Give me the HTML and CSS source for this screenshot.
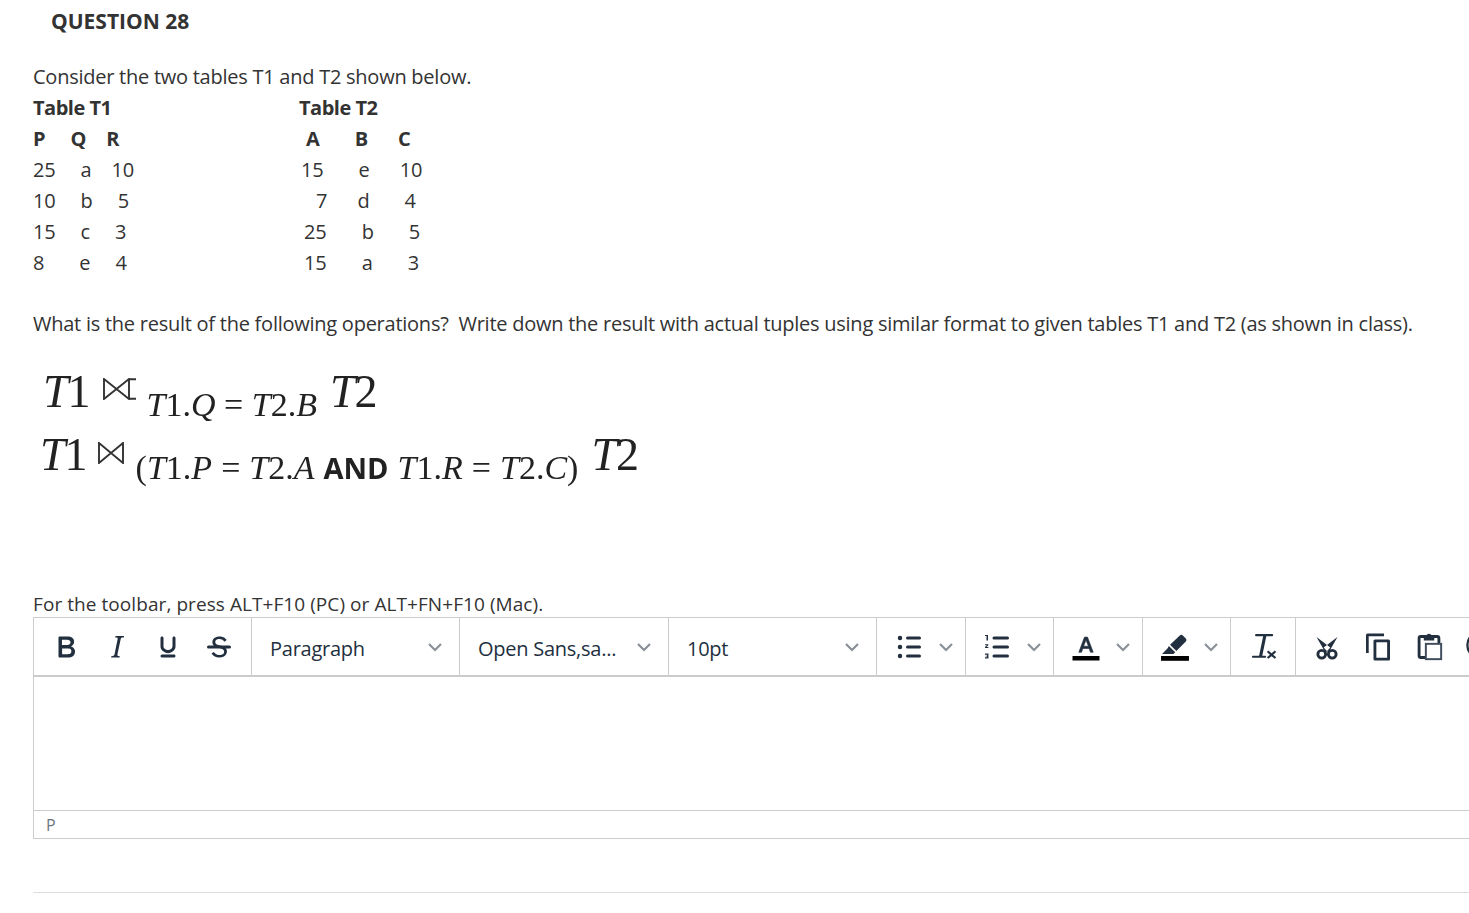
FILE: index.html
```html
<!DOCTYPE html>
<html lang="en">
<head>
<meta charset="utf-8">
<title>Question 28</title>
<link rel="stylesheet" href="styles.css">
</head>
<body>
<h1 class="q-title">QUESTION 28</h1>
<main class="content">
  <p class="line">Consider the two tables T1 and T2 shown below.</p>
  <div class="tables">
    <div class="tbl">
      <div class="line strong t-title">Table T1</div>
      <div class="line strong">P     Q    R</div>
      <div class="line">25     a    10</div>
      <div class="line">10     b     5</div>
      <div class="line">15     c     3</div>
      <div class="line">8       e     4</div>
    </div>
    <div class="tbl t2">
      <div class="line strong t-title t2-title">Table T2</div>
      <div class="line strong"> A       B      C</div>
      <div class="line">15       e      10</div>
      <div class="line">   7      d       4</div>
      <div class="line nudge"> 25       b       5</div>
      <div class="line nudge"> 15       a       3</div>
    </div>
  </div>
  <p class="line question">What is the result of the following operations?  Write down the result with actual tuples using similar format to given tables T1 and T2 (as shown in class).</p>

  <div class="formula">
    <div class="f-line f1">
      <span class="big"><i>T</i>1</span>
      <svg class="join" viewBox="0 0 33 22"><path d="M1 1v20L26 1v20L1 1zM26 1.200h7M26 20.800h7" fill="none" stroke="#333" stroke-width="1.900"/></svg>
      <span class="sub"><i>T</i>1.<i>Q</i> = <i>T</i>2.<i>B</i></span>
      <span class="big"><i>T</i>2</span>
    </div>
    <div class="f-line f2">
      <span class="big"><i>T</i>1</span>
      <svg class="join j2" viewBox="0 0 26 22"><path d="M1 1v20L25 1v20L1 1z" fill="none" stroke="#333" stroke-width="1.900"/></svg>
      <span class="sub wide">(<i>T</i>1.<i>P</i> = <i>T</i>2.<i>A</i> <b class="and">AND</b> <i>T</i>1.<i>R</i> = <i>T</i>2.<i>C</i>)</span>
      <span class="big"><i>T</i>2</span>
    </div>
  </div>

  <p class="hint">For the toolbar, press ALT+F10 (PC) or ALT+FN+F10 (Mac).</p>
  <section class="editor">
    <div class="toolbar">
      <div class="group g-format">
        <button class="btn"><svg viewBox="0 0 24 24"><path d="M7.8 19c-.3 0-.5 0-.6-.2l-.2-.5V5.7c0-.2 0-.4.2-.5l.6-.2h5c1.5 0 2.7.3 3.5 1 .7.6 1.1 1.4 1.1 2.5a3 3 0 0 1-.6 1.9c-.4.6-1 1-1.6 1.2.4.1.9.3 1.3.6s.8.7 1 1.2c.4.4.5 1 .5 1.6 0 1.3-.4 2.3-1.3 3-.8.7-2.1 1-3.8 1H7.8zm5-8.3c.6 0 1.2-.1 1.6-.5.4-.3.6-.7.6-1.3 0-1.1-.8-1.7-2.3-1.7H9.3v3.5h3.4zm.5 6c.7 0 1.3-.1 1.7-.4.4-.4.6-.9.6-1.5s-.2-1-.7-1.4c-.4-.3-1-.4-2-.4H9.4v3.8h4z"/></svg></button>
        <button class="btn"><svg viewBox="0 0 24 24"><path d="M16.7 4.7l-.1.9h-.3c-.6 0-1 0-1.4.3-.3.3-.4.6-.5 1.1l-2.1 9.8v.6c0 .5.4.8 1.4.8h.2l-.2.8H8l.2-.8h.2c1.1 0 1.8-.5 2-1.5l2-9.8.1-.5c0-.6-.4-.8-1.4-.8h-.3l.2-.9h5.8z"/></svg></button>
        <button class="btn"><svg viewBox="0 0 24 24"><path d="M16 5c.6 0 1 .4 1 1v5.5a4 4 0 0 1-.4 1.8l-1 1.4a5.3 5.3 0 0 1-5.5 1 5 5 0 0 1-1.6-1c-.5-.4-.8-.9-1.1-1.4a4 4 0 0 1-.4-1.8V6c0-.6.4-1 1-1s1 .4 1 1v5.5c0 .3 0 .6.2 1l.6.7a3.3 3.3 0 0 0 2.2.8 3.4 3.4 0 0 0 2.2-.8c.3-.2.4-.5.6-.8l.2-.9V6c0-.6.4-1 1-1zM8 17h8c.6 0 1 .4 1 1s-.4 1-1 1H8a1 1 0 0 1 0-2z"/></svg></button>
        <button class="btn"><svg viewBox="0 0 24 24"><path d="M15.6 8.5c-.5-.7-1-1.1-1.3-1.3-.6-.4-1.3-.6-2-.6-2.7 0-2.8 1.7-2.8 2.1 0 1.6 1.8 2 3.2 2.3 4.4.9 4.6 2.8 4.6 3.9 0 1.4-.7 4.1-5 4.1A6.2 6.2 0 0 1 7 16.4l1.5-1.1c.4.6 1.6 2 3.7 2 1.6 0 2.5-.4 3-1.2.4-.8.3-2-.8-2.6-.7-.4-1.6-.7-2.9-1-1-.2-3.9-.8-3.9-3.6C7.6 6 10.3 5 12.4 5c2.9 0 4.2 1.6 4.7 2.4l-1.5 1.1z"/><path d="M5 11h14a1 1 0 0 1 0 2H5a1 1 0 0 1 0-2z"/></svg></button>
      </div>
      <div class="group select s-para"><span>Paragraph</span><svg class="chev" viewBox="0 0 16 10"><path d="M2 2l6 6 6-6"/></svg></div>
      <div class="group select s-font"><span>Open Sans,sa...</span><svg class="chev" viewBox="0 0 16 10"><path d="M2 2l6 6 6-6"/></svg></div>
      <div class="group select s-size"><span>10pt</span><svg class="chev" viewBox="0 0 16 10"><path d="M2 2l6 6 6-6"/></svg></div>
      <div class="group split sp-a">
        <svg class="ico" viewBox="0 0 24 24"><path d="M11 5h8a1 1 0 0 1 0 2h-8a1 1 0 0 1 0-2zm0 6h8a1 1 0 0 1 0 2h-8a1 1 0 0 1 0-2zm0 6h8a1 1 0 0 1 0 2h-8a1 1 0 0 1 0-2z"/><circle cx="6" cy="6" r="1.5"/><circle cx="6" cy="12" r="1.5"/><circle cx="6" cy="18" r="1.5"/></svg>
        <svg class="chev" viewBox="0 0 16 10"><path d="M2 2l6 6 6-6"/></svg>
      </div>
      <div class="group split sp-b">
        <svg class="ico" viewBox="0 0 24 24"><path d="M10 17h9a1 1 0 0 1 0 2h-9a1 1 0 0 1 0-2zm0-6h9a1 1 0 0 1 0 2h-9a1 1 0 0 1 0-2zm0-6h9a1 1 0 0 1 0 2h-9a1 1 0 0 1 0-2zM5 4.600H4V4h2v3.600H5zM4 10.200h2.200v.7L5 12h1.300v.7H4V12l1.300-1.100H4zM4 16.400h2.300v3.200H4v-.7h1.400v-.5H4.400v-.6h1v-.7H4z"/></svg>
        <svg class="chev" viewBox="0 0 16 10"><path d="M2 2l6 6 6-6"/></svg>
      </div>
      <div class="group split sp-c">
        <svg class="ico" viewBox="0 0 24 24"><path class="heavy" d="M9 15.500H7.200L11 5.400h2l3.800 10.100H15l-.9-2.500H9.900zm1.400-4h3.200L12 7.300z"/><rect class="ink" x="3" y="18" width="18" height="3"/></svg>
        <svg class="chev" viewBox="0 0 16 10"><path d="M2 2l6 6 6-6"/></svg>
      </div>
      <div class="group split sp-d">
        <svg class="ico" viewBox="0 0 24 24"><path d="M15.200 4.300a1.400 1.400 0 0 1 2 0l2 2a1.400 1.400 0 0 1 0 2l-6.300 6.400-4.200-4.200zM7.900 11.300l4.300 4.200-1.300 1.200H3.400l3.700-3.800z"/><rect class="ink" x="2.700" y="18" width="18.600" height="3.200"/></svg>
        <svg class="chev" viewBox="0 0 16 10"><path d="M2 2l6 6 6-6"/></svg>
      </div>
      <div class="group g-clear">
        <button class="btn"><svg viewBox="0 0 24 24"><path d="M7.400 3.400h10.700a.7.700 0 0 1 0 1.400h-3.900l-2.700 13h1.900a.7.700 0 0 1 0 1.400H5.300a.7.700 0 0 1 0-1.400h4.100l2.700-13H7.400a.7.700 0 0 1 0-1.400z"/><path d="M15.500 14.400l2.200 1.700 2.200-1.700.9 1-2 1.700 2 1.700-.9 1-2.200-1.700-2.200 1.700-.9-1 2-1.700-2-1.700z"/></svg></button>
      </div>
      <div class="group g-clip">
        <button class="btn"><svg viewBox="0 0 24 24"><path d="M5 5.300l9.200 7.100-3.200 3.400zM19 5.300l-9.200 7.100 3.200 3.400z"/><circle class="ring thick" cx="8.500" cy="16.800" r="2.600"/><circle class="ring thick" cx="15.500" cy="16.800" r="2.600"/></svg></button>
        <button class="btn"><svg viewBox="0 0 24 24"><path d="M16 3H5a1 1 0 0 0-1 1v12h1.800V4.800H16V3zm3 4H10a1 1 0 0 0-1 1v12a1 1 0 0 0 1 1h9a1 1 0 0 0 1-1V8a1 1 0 0 0-1-1zm-.9 12.100h-7.200V8.900h7.200v10.200z"/></svg></button>
        <button class="btn"><svg viewBox="0 0 24 24"><rect class="ring thick" x="5.400" y="5" width="13.200" height="14" rx="1.200"/><path d="M8.500 4.500h1.700a1.900 1.900 0 0 1 3.600 0h1.700v3.200h-7z"/><rect class="sheet" x="9.900" y="9.900" width="10.200" height="10.200"/></svg></button>
        <button class="btn"><svg viewBox="0 0 24 24"><circle class="ring" cx="12.400" cy="10.700" r="8.800"/></svg></button>
      </div>
    </div>
    <div class="edit-area"></div>
    <div class="statusbar">P</div>
  </section>
  <hr class="rule">
</main>
</body>
</html>
```

FILE: styles.css
```css
html, body { margin: 0; padding: 0; }
body {
  width: 1469px;
  height: 913px;
  overflow: hidden;
  background: #fff;
  color: #333;
  font-family: "Open Sans", sans-serif;
  font-size: 20px;
  letter-spacing: -0.25px;
}
.q-title {
  margin: 0;
  padding: 7px 0 0 51px;
  height: 61px;
  box-sizing: border-box;
  font-size: 21px;
  font-weight: 700;
  line-height: 28px;
  letter-spacing: 0;
  color: #333;
}
.content { padding-left: 33px; width: 1500px; }
.line {
  margin: 0;
  line-height: 31px;
  height: 31px;
  white-space: pre;
}
.strong { font-weight: 700; }
.tables { display: grid; grid-template-columns: 268px 1fr; letter-spacing: -0.18px; }
.t-title { letter-spacing: -0.5px; }
.t2-title { margin-left: -2px; }
.nudge { margin-left: -2px; }
.question { margin-top: 30px; }

.formula {
  margin-top: 21px;
  height: 232px;
  color: #222;
  font-family: "Liberation Serif", serif;
  letter-spacing: 0;
  filter: blur(.35px);
}
.f-line { display: flex; align-items: baseline; white-space: pre; height: 63px; }
.f1 { margin-left: 10px; }
.f2 { margin-left: 7px; }
.big { font-size: 46px; line-height: 63px; letter-spacing: -1px; }
.sub { font-size: 34px; line-height: 40px; position: relative; top: 9px; margin-right: 13px; }
.wide { word-spacing: 0.5px; }
.and { font-family: "Open Sans", sans-serif; font-size: 29px; font-weight: 700; }
.join { width: 33px; height: 22px; align-self: flex-start; margin: 18px 11px 0 13px; }
.j2 { width: 26px; margin: 19px 12px 0 11px; }

.hint { margin: 0; line-height: 24px; height: 25px; font-size: 19px; letter-spacing: 0.07px; }
.editor {
  width: 1500px;
  border: 1px solid #ccc;
  box-sizing: border-box;
  height: 222px;
  display: flex;
  flex-direction: column;
}
.toolbar {
  display: flex;
  height: 59px;
  flex: none;
  border-bottom: 2px solid #ccc;
  box-sizing: border-box;
  color: #222f3e;
}
.group {
  display: flex;
  align-items: center;
  box-sizing: border-box;
  border-right: 1px solid #ccc;
  flex: none;
  padding-top: 1px;
}
.btn {
  width: 36px;
  height: 36px;
  padding: 0;
  margin-right: 15px;
  border: 0;
  background: none;
  flex: none;
}
.btn svg, .ico { width: 36px; height: 36px; display: block; fill: #222f3e; flex: none; }
.ink { fill: #000; }
.heavy { stroke: #222f3e; stroke-width: .4; }
.ring { fill: none; stroke: #222f3e; stroke-width: 1.6; }
.thick { stroke-width: 1.9; }
.sheet { fill: #fff; stroke: #3f4c5c; stroke-width: 1.3; }
.chev { width: 16px; height: 10px; flex: none; fill: none; stroke: #8a9098; stroke-width: 2.2; }
.g-format { width: 218px; padding-left: 14px; }
.select { justify-content: space-between; font-size: 20px; color: #222f3e; padding: 1px 16px 0 18px; white-space: nowrap; }
.select span { margin-top: 2px; }
.s-para { width: 208px; }
.s-font { width: 209px; }
.s-size { width: 208px; }
.split { padding-left: 14px; gap: 11px; }
.sp-a { width: 89px; }
.sp-b { width: 88px; padding-left: 13px; gap: 11px; }
.sp-c { width: 89px; gap: 11px; }
.sp-d { width: 88px; gap: 10px; }
.g-clear { width: 65px; padding-left: 14px; }
.g-clip { border-right: 0; padding-left: 13px; }
.edit-area { flex: 1; }
.statusbar {
  height: 28px;
  border-top: 1px solid #ccc;
  box-sizing: border-box;
  padding-left: 12px;
  font-size: 16px;
  line-height: 28px;
  color: #6d7680;
  flex: none;
}
.rule { margin: 53px 0 0; width: 1500px; border: 0; border-top: 1px solid #ddd; }
```
